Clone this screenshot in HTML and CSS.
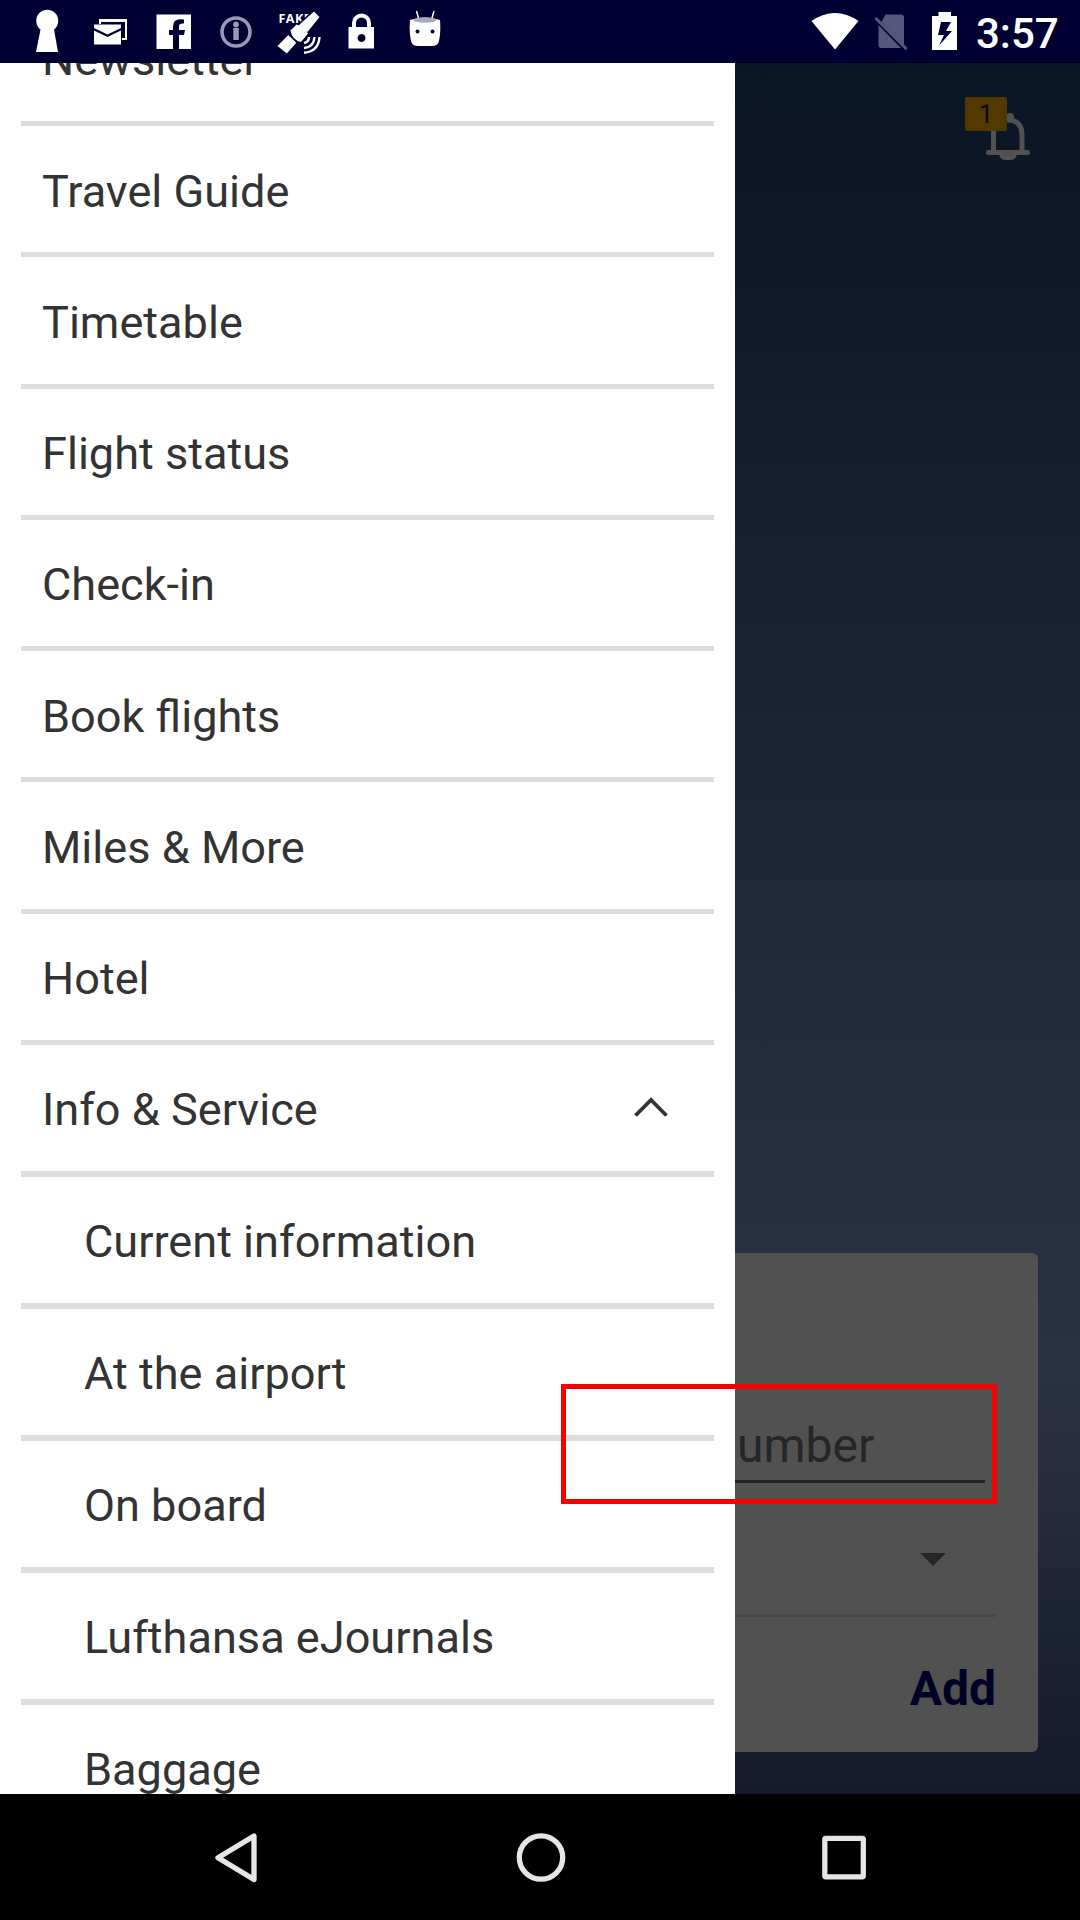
FILE: index.html
```html
<!DOCTYPE html>
<html lang="en">
<head>
<meta charset="utf-8">
<title>Travel menu</title>
<link rel="stylesheet" href="styles.css">
</head>
<body>
<header class="status">
  <svg class="status-icon" viewBox="15 0 63 63"><path d="M36 52l4.500-22.500a11 11 0 1 1 13.500 0L58 52z"/></svg>
  <svg class="status-icon" viewBox="78 0 63 63"><path d="M99 19h28v21h-5v-2h3V22H101v2h-2z"/><path d="M94 24.500h27v3.500L107.500 34.500 94 28zM94 30.500l13.500 6.500L121 30.500v14H94z"/></svg>
  <svg class="status-icon" viewBox="141 0 63 63"><path d="M156.500 14.500H191V49h-12V35h5l1-5h-6v-4q0-3 5-2.500v-4q-11-2-11 7V30h-4v5h4v14h-16.500z"/></svg>
  <svg class="status-icon dim" viewBox="204 0 63 63"><circle cx="236" cy="32" r="14" fill="none" stroke="currentColor" stroke-width="3.500"/><circle cx="236" cy="24.500" r="2.900"/><rect x="233.300" y="28" width="5.500" height="12"/></svg>
  <svg class="status-icon" viewBox="267 0 63 63">
    <text class="fake" x="278.500" y="22.500">FAKE</text>
    <path class="cut" d="M297 25L314 9l9 8-15 18z"/>
    <path d="M277.500 46l10.800-11 8 7.700-9.500 10.800z"/>
    <path d="M299 25L314 11.500l5.500 5.500L307.500 32z"/>
    <path d="M290.500 30.500L296.500 24.500q8 1.500 11.500 9L301 42q-9-2-10.500-11.500z"/>
    <path class="waves" d="M304 43q5-1 5-6M304 48q10-1 10.500-11M304 52.700q14.500-1 15.500-15.700"/>
  </svg>
  <svg class="status-icon" viewBox="330 0 63 63"><path fill-rule="evenodd" d="M348.500 27H352v-4a9.500 9.500 0 0 1 19 0v4h3v21.500h-25.500zM356 27h11v-4a5.500 5.500 0 0 0-11 0zM361.500 34a4 4 0 1 0 .1 0z"/></svg>
  <svg class="status-icon" viewBox="393 0 63 63"><path d="M410 20q15-5 30 0 1 12-1 21-1 5-7 5h-14q-6 0-7-5-2-9-1-21z"/><ellipse cx="425" cy="20" rx="11.500" ry="2.800" fill="#aaaabd"/><path d="M418.500 18l-2-7M432 18l2-7" stroke="currentColor" stroke-width="1.500"/><circle class="hole" cx="417.500" cy="31.500" r="2"/><circle class="hole" cx="432.500" cy="31.500" r="2"/></svg>
  <div class="spacer"></div>
  <svg class="status-icon" viewBox="803 0 63 63"><path d="M811.500 21q23.500-16 47 0L835 49.500z"/></svg>
  <svg class="sim" viewBox="866 0 50 63"><path d="M885.500 14.500H901q3 0 3 3V45l-22.500-23zM878.500 25l22.500 23h-19.500q-3 0-3-3z"/><path d="M875.500 18l31 31" stroke="currentColor" stroke-width="3"/></svg>
  <svg class="battery" viewBox="916 0 61 63"><path fill-rule="evenodd" d="M932 16h6.500v-4H951v4h6v34h-25zM941 22l-3 13h6l-5 10.500L952 31h-6l5-9z"/></svg>
  <time class="clock">3:57</time>
</header>

<main class="app">
  <nav class="drawer">
    <ul class="menu">
      <li class="item">Newsletter</li>
      <li class="item">Travel Guide</li>
      <li class="item">Timetable</li>
      <li class="item">Flight status</li>
      <li class="item">Check-in</li>
      <li class="item">Book flights</li>
      <li class="item">Miles &amp; More</li>
      <li class="item">Hotel</li>
      <li class="item group">Info &amp; Service
        <svg class="chevron" viewBox="0 0 34 20"><path d="M1.500 18.500L17 3l15.500 15.500" fill="none" stroke="#333" stroke-width="3.800"/></svg>
      </li>
      <li class="item sub">Current information</li>
      <li class="item sub">At the airport</li>
      <li class="item sub">On board</li>
      <li class="item sub">Lufthansa eJournals</li>
      <li class="item sub">Baggage</li>
    </ul>
  </nav>
  <section class="page">
    <div class="alerts">
      <svg class="bell" viewBox="986 113 44 48"><path d="M1006 119v-2q0-4 4-4t4 4v2z"/><path d="M993.500 152v-18q0-14 14-14t14.500 14v18" fill="none" stroke="currentColor" stroke-width="5"/><rect x="986" y="150" width="44" height="5" rx="2.500"/><path d="M999 154h18q-1 6-7 6h-4q-6 0-7-6z"/></svg>
      <span class="badge">1</span>
    </div>
    <form class="card">
      <div class="field">umber</div>
      <div class="select"><svg class="caret" viewBox="0 0 26 13"><path d="M0 0h26L13 13z"/></svg></div>
      <div class="actions">Add</div>
    </form>
  </section>
</main>

<footer class="nav">
  <svg class="nav-icon" viewBox="210 1826 63 63"><path d="M255 1836v43.500L219 1857.700z"/></svg>
  <svg class="nav-icon" viewBox="510.500 1826 63 63"><circle cx="540.500" cy="1857.500" r="21.700"/></svg>
  <svg class="nav-icon" viewBox="812 1826 63 63"><rect x="824.800" y="1838.300" width="38.500" height="38.500" rx="1"/></svg>
</footer>
<div class="highlight"></div>
</body>
</html>
```

FILE: styles.css
```css
* { box-sizing: border-box; }

body {
  margin: 0;
  width: 1080px;
  height: 1920px;
  display: flex;
  flex-direction: column;
  overflow: hidden;
  position: relative;
  font-family: Roboto, sans-serif;
  background: #000;
}

svg { display: block; flex: none; fill: currentColor; }

.status {
  height: 63px;
  flex: none;
  display: flex;
  padding: 0 21px 0 15px;
  background: #000033;
  color: #fff;
}
.status-icon { width: 63px; height: 63px; }
.dim { color: #9a9ab8; }
.fake { font: 700 12.5px "Open Sans", sans-serif; letter-spacing: 0.5px; }
.cut, .hole { fill: #000033; }
.waves { fill: none; stroke: #fff; stroke-width: 2.4; }
.spacer { flex: 1; }
.sim { width: 50px; height: 63px; color: #57577b; }
.battery { width: 61px; height: 63px; }
.clock {
  width: 82px;
  margin-left: -1px;
  margin-right: 1px;
  font-size: 42px;
  font-weight: 500;
  line-height: 68px;
  white-space: nowrap;
}

.app {
  height: 1731px;
  flex: none;
  display: grid;
  grid-template-columns: 735px 345px;
}

.drawer { height: 1731px; overflow: hidden; background: #fff; }
.menu {
  list-style: none;
  margin: -68.25px 21px 0;
  padding: 0;
}
.item {
  height: 131.25px;
  display: flex;
  align-items: center;
  justify-content: space-between;
  padding: 4px 46px 0 21px;
  border-bottom: 5px solid #ddd;
  color: #333;
  font-size: 45.1px;
  white-space: nowrap;
}
.group, .sub { height: 132px; border-bottom-width: 6px; }
.sub { padding-left: 63px; }
.chevron { width: 34px; height: 20px; margin-top: -6px; }

.page {
  height: 1731px;
  display: flex;
  flex-direction: column;
  justify-content: space-between;
  padding: 34px 42px 42px 0;
  background: linear-gradient(#0a1526 0, #0e1829 190px, #181f30 456px, #1f2737 780px, #262d3e 1080px, #2a3143 1310px, #252b3d 1440px, #1b2232 1590px, #171a2a 1731px);
}

.alerts { position: relative; align-self: flex-end; padding: 16px 8px 0 0; }
.bell { width: 44px; height: 48px; color: #525252; }
.badge {
  position: absolute;
  left: -21px;
  top: 0;
  width: 42px;
  height: 34px;
  border-radius: 2px;
  background: #523900;
  color: #080a10;
  font-size: 25px;
  line-height: 35px;
  text-align: center;
}

.card {
  height: 499px;
  padding: 131px 42px 0 0;
  border-radius: 0 6px 6px 0;
  background: #515151;
  color: #262626;
}
.field {
  height: 99px;
  margin-right: 11px;
  padding: 34px 0 0 2px;
  border-bottom: 3px solid #222;
  font-size: 48px;
  line-height: 56px;
}
.select {
  height: 134px;
  display: flex;
  justify-content: flex-end;
  padding: 70px 50px 0 0;
  border-bottom: 3px solid #484848;
}
.caret { width: 26px; height: 13px; }
.actions {
  padding-top: 44px;
  color: #000026;
  font-size: 48px;
  font-weight: 700;
  line-height: 56px;
  text-align: right;
}

.nav {
  height: 126px;
  display: flex;
  align-items: center;
  justify-content: space-between;
  padding: 0 205px 0 209px;
  background: #000;
}
.nav-icon {
  width: 63px;
  height: 63px;
  fill: none;
  stroke: #e6e6e6;
  stroke-width: 5.3;
  stroke-linejoin: round;
}

.highlight {
  position: absolute;
  left: 561px;
  top: 1384px;
  width: 436px;
  height: 120px;
  border: 5px solid #f90000;
}
```
